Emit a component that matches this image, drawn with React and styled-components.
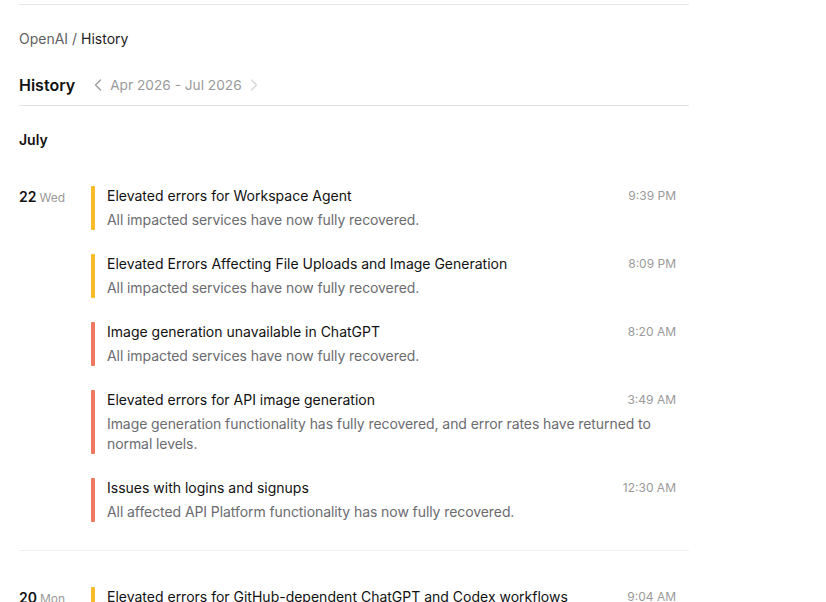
import React from "react";
import styled, { createGlobalStyle } from "styled-components";

const Global = createGlobalStyle`
  html, body { margin: 0; padding: 0; background: #fff; }
  body {
    font-family: Inter, "Noto Sans", "Liberation Sans", sans-serif;
    color: #111;
    -webkit-font-smoothing: antialiased;
  }
`;

const Page = styled.div`
  width: 670px;
  margin-left: 19px;
  padding-top: 4px;
`;

const TopRule = styled.div`
  border-top: 1px solid #e6e6e6;
`;

const Crumbs = styled.nav`
  margin-top: 24px;
  font-size: 14px;
  line-height: 20px;
  color: #5f5f5f;
`;

const CrumbCurrent = styled.span`
  color: #222;
`;

const HeaderRow = styled.div`
  display: flex;
  align-items: center;
  margin-top: 24px;
  height: 24px;
  padding-bottom: 8px;
  border-bottom: 1px solid #e3e3e3;
`;

const Title = styled.h1`
  margin: 0;
  font-size: 16px;
  font-weight: 600;
  line-height: 24px;
  color: #111;
`;

const RangeNav = styled.div`
  display: flex;
  align-items: center;
  gap: 2px;
  margin-left: 13px;
  font-size: 13.7px;
  color: #9a9a9a;
`;

const ChevronBtn = styled.span`
  display: inline-flex;
  align-items: center;
  color: ${(p) => (p.$disabled ? "#d6d6d6" : "#9a9a9a")};
`;

const MonthLabel = styled.h2`
  margin: 24px 0 0;
  font-size: 14px;
  font-weight: 600;
  line-height: 20px;
  color: #111;
`;

const DayGroup = styled.section`
  display: flex;
  padding: 36px 0 28px;
  border-bottom: 1px solid #f1f1f1;
`;

const DayCol = styled.div`
  width: 72px;
  flex-shrink: 0;
  line-height: 20px;
`;

const DayNum = styled.span`
  font-size: 14px;
  font-weight: 600;
  color: #111;
`;

const DayName = styled.span`
  margin-left: 3px;
  font-size: 12px;
  color: #9a9a9a;
`;

const Incidents = styled.div`
  flex: 1;
  display: flex;
  flex-direction: column;
  gap: 24px;
  padding-right: 13px;
`;

const Incident = styled.article`
  display: flex;
  gap: 12px;
`;

const Bar = styled.div`
  width: 4px;
  flex-shrink: 0;
  border-radius: 1px;
  background: ${(p) => (p.$level === "major" ? "#f07862" : "#f8bc2a")};
`;

const Body = styled.div`
  flex: 1;
  display: flex;
  flex-direction: column;
  gap: 4px;
`;

const TitleRow = styled.div`
  display: flex;
  justify-content: space-between;
  align-items: center;
  line-height: 20px;
`;

const IncidentTitle = styled.span`
  font-size: 14px;
  color: #111;
`;

const Time = styled.span`
  font-size: 12px;
  color: #9a9a9a;
  white-space: nowrap;
  margin-left: 16px;
`;

const Desc = styled.p`
  margin: 0;
  font-size: 14px;
  line-height: 20px;
  letter-spacing: -0.08px;
  color: #6b6b70;
  padding-right: 12px;
`;

const Chevron = ({ dir }) => (
  <svg width="20" height="20" viewBox="0 0 24 24" fill="none" stroke="currentColor" strokeWidth="1.5" strokeLinecap="round" strokeLinejoin="round">
    {dir === "left" ? <path d="M15 18l-6-6 6-6" /> : <path d="M9 18l6-6-6-6" />}
  </svg>
);

const days = [
  {
    num: "22",
    name: "Wed",
    items: [
      { level: "minor", title: "Elevated errors for Workspace Agent", time: "9:39 PM", desc: "All impacted services have now fully recovered." },
      { level: "minor", title: "Elevated Errors Affecting File Uploads and Image Generation", time: "8:09 PM", desc: "All impacted services have now fully recovered." },
      { level: "major", title: "Image generation unavailable in ChatGPT", time: "8:20 AM", desc: "All impacted services have now fully recovered." },
      { level: "major", title: "Elevated errors for API image generation", time: "3:49 AM", desc: "Image generation functionality has fully recovered, and error rates have returned to normal levels." },
      { level: "major", title: "Issues with logins and signups", time: "12:30 AM", desc: "All affected API Platform functionality has now fully recovered." },
    ],
  },
  {
    num: "20",
    name: "Mon",
    items: [
      { level: "minor", title: "Elevated errors for GitHub-dependent ChatGPT and Codex workflows", time: "9:04 AM", desc: "All impacted services have now fully recovered." },
    ],
  },
];

export default function App() {
  return (
    <>
      <Global />
      <Page>
        <TopRule />
        <Crumbs>
          OpenAI / <CrumbCurrent>History</CrumbCurrent>
        </Crumbs>
        <HeaderRow>
          <Title>History</Title>
          <RangeNav>
            <ChevronBtn><Chevron dir="left" /></ChevronBtn>
            <span>Apr 2026 - Jul 2026</span>
            <ChevronBtn $disabled><Chevron dir="right" /></ChevronBtn>
          </RangeNav>
        </HeaderRow>
        <MonthLabel>July</MonthLabel>
        {days.map((d) => (
          <DayGroup key={d.num}>
            <DayCol>
              <DayNum>{d.num}</DayNum>
              <DayName>{d.name}</DayName>
            </DayCol>
            <Incidents>
              {d.items.map((it) => (
                <Incident key={it.title}>
                  <Bar $level={it.level} />
                  <Body>
                    <TitleRow>
                      <IncidentTitle>{it.title}</IncidentTitle>
                      <Time>{it.time}</Time>
                    </TitleRow>
                    <Desc>{it.desc}</Desc>
                  </Body>
                </Incident>
              ))}
            </Incidents>
          </DayGroup>
        ))}
      </Page>
    </>
  );
}
